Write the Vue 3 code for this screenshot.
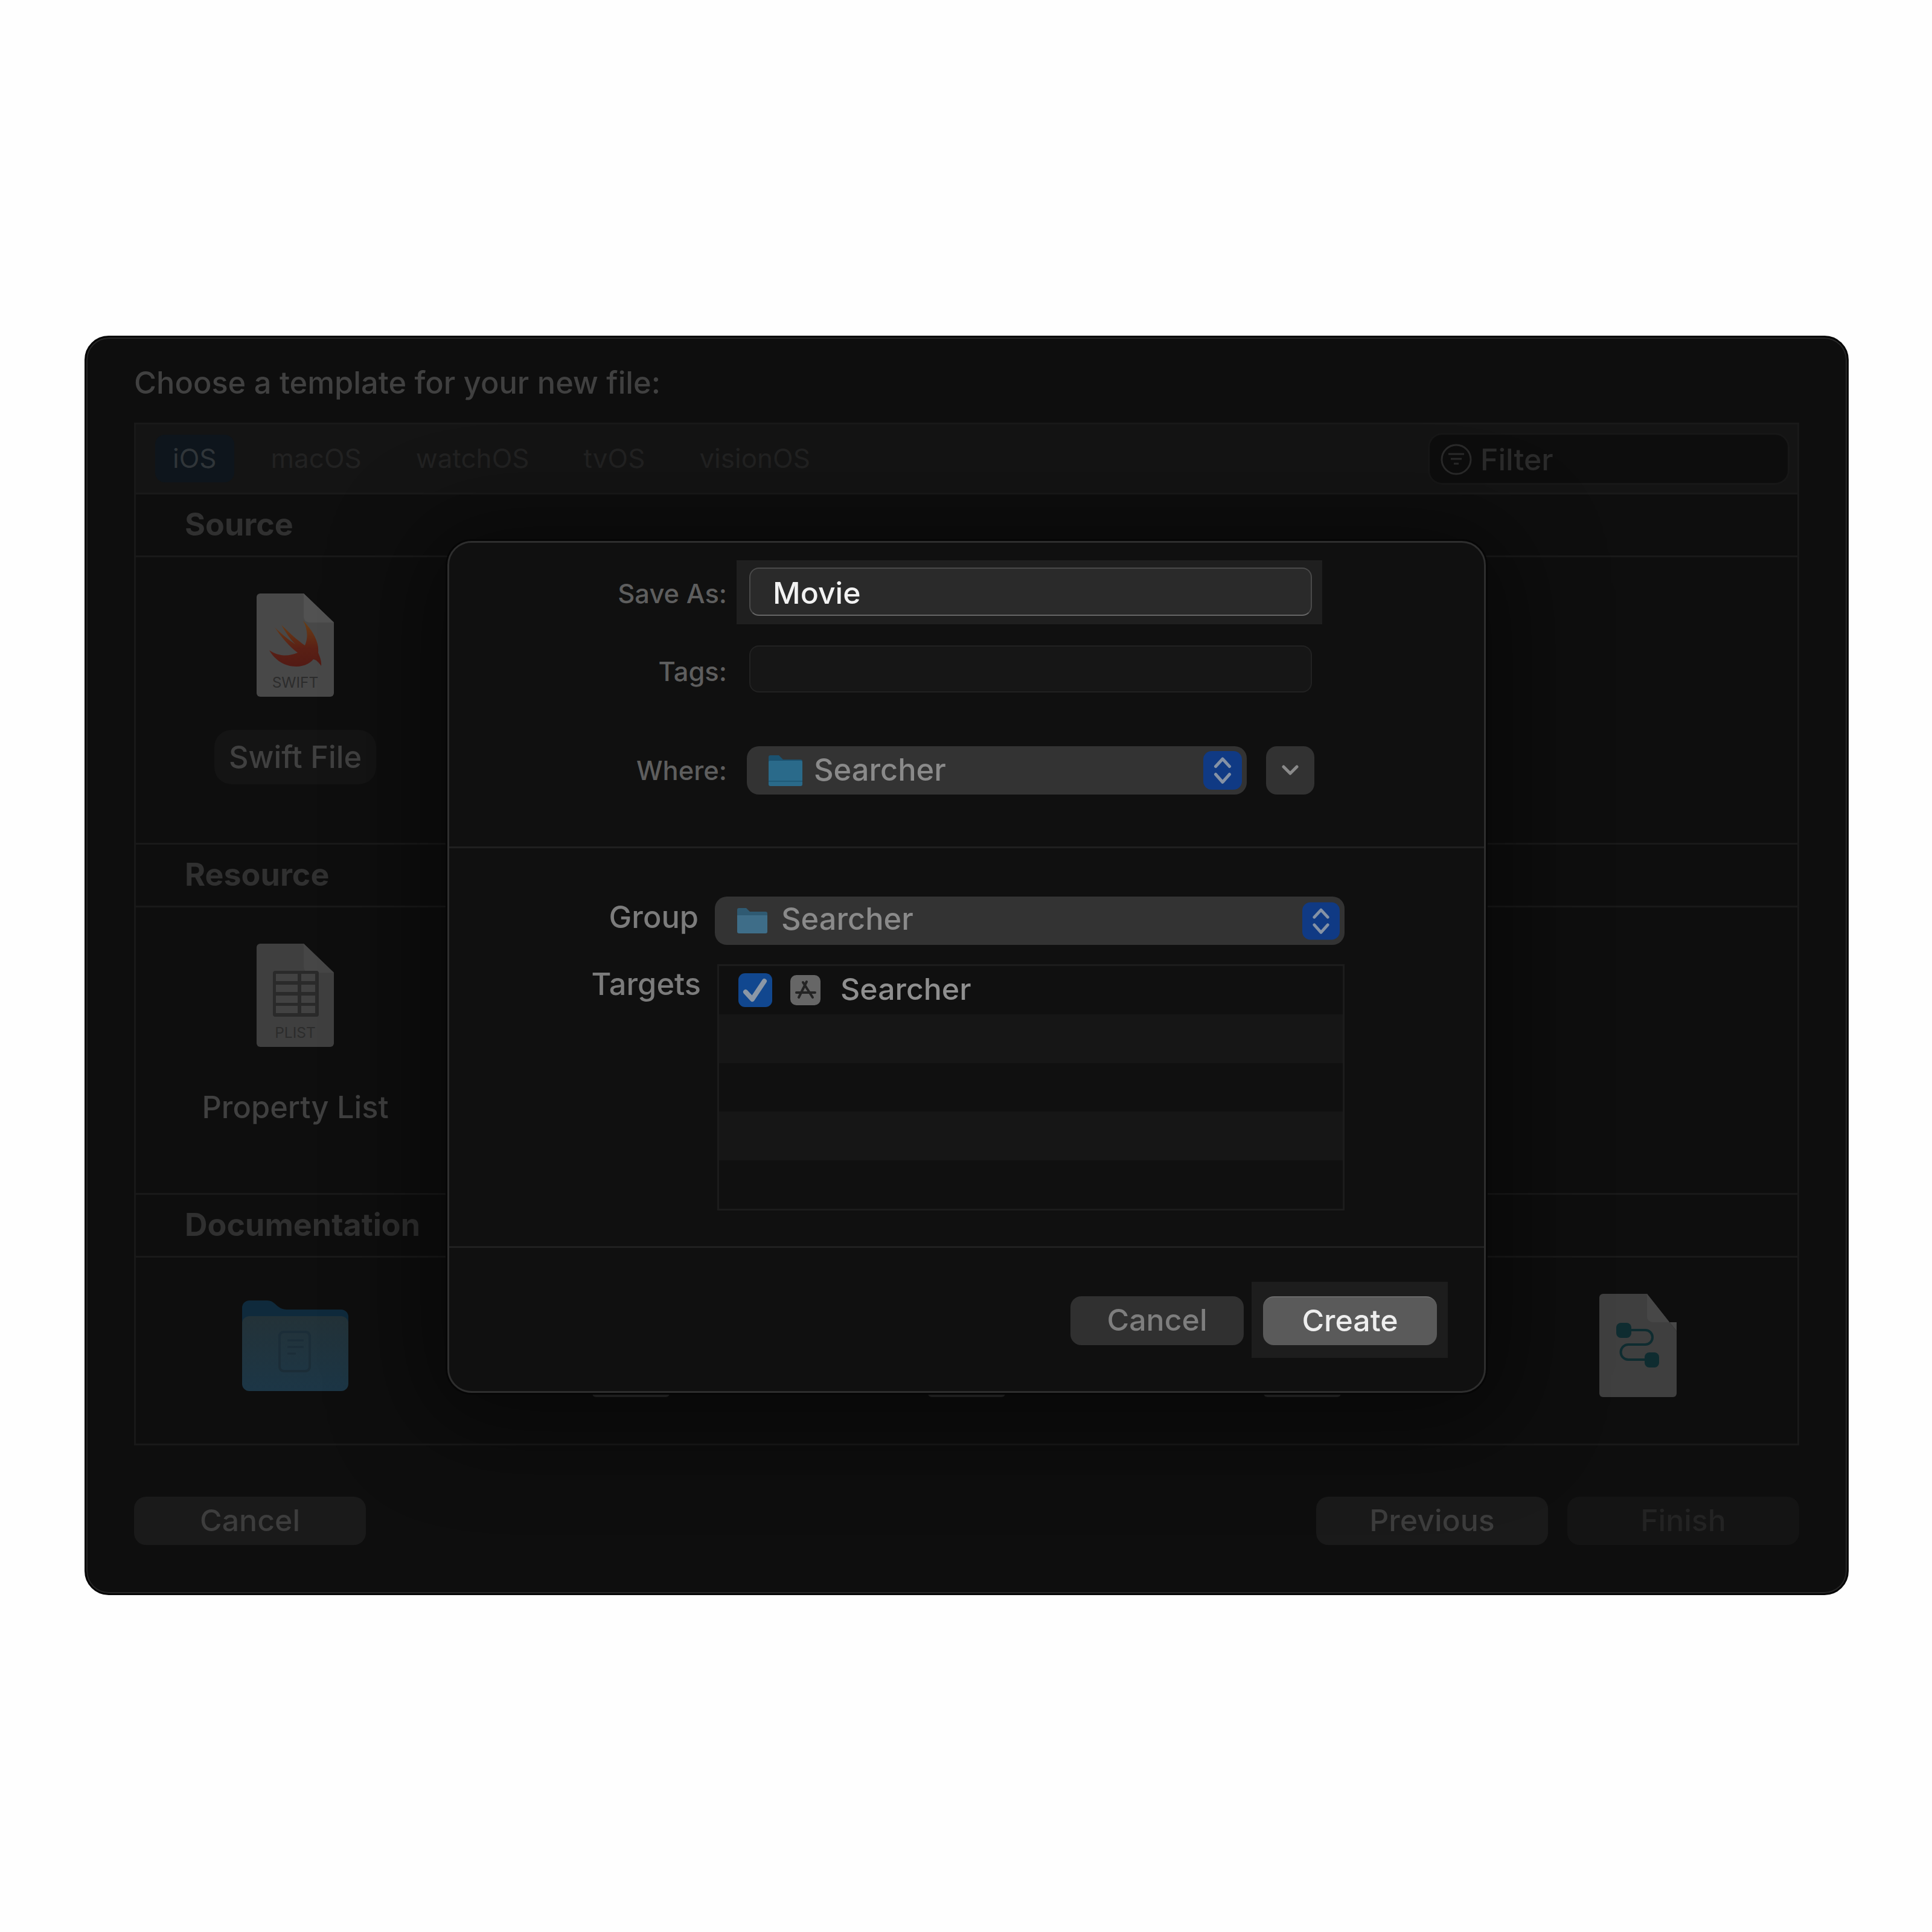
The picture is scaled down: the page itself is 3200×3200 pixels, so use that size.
<template>
  <div class="page">
    <div class="window">
      <div class="title">Choose a template for your new file:</div>

      <div class="panel">
        <div class="tabbar">
          <div class="tabs">
            <div v-for="(t, i) in tabs" :key="t" class="tab" :class="{ active: i === 0 }">{{ t }}</div>
          </div>
          <div class="filter">
            <svg width="52" height="52" viewBox="0 0 52 52" fill="none" stroke="#2a2a2a" stroke-width="3">
              <circle cx="26" cy="26" r="24" />
              <path d="M13 17H39M17 25H35M22 33H30" />
            </svg>
            <span>Filter</span>
          </div>
        </div>

        <div class="head">Source</div>
        <div class="items">
          <div class="item">
            <svg class="file" width="128" height="171" viewBox="0 0 128 171">
              <defs>
                <linearGradient id="swiftGrad" x1="0" y1="0" x2="0" y2="1">
                  <stop offset="0" stop-color="#6a4015" />
                  <stop offset="0.6" stop-color="#5a2015" />
                  <stop offset="1" stop-color="#521a14" />
                </linearGradient>
              </defs>
              <path d="M6 0H78L128 48V165a6 6 0 0 1-6 6H6a6 6 0 0 1-6-6V6a6 6 0 0 1 6-6Z" fill="#484848" />
              <path d="M78 0L128 48H87a9 9 0 0 1-9-9Z" fill="#525252" />
              <path d="M77 45C92 60 104 80 102 98C105 105 108 113 107 120C103 114 99 110 94 109C86 118 76 121 66 121C46 121 30 110 21 94C36 104 52 105 68 98C54 88 41 72 30 56C42 68 55 78 64 84C56 76 47 63 41 52C52 63 68 78 80 86C86 72 84 58 77 45Z" fill="url(#swiftGrad)" />
              <text x="64" y="156" text-anchor="middle" class="ext">SWIFT</text>
            </svg>
            <div class="label selected">Swift File</div>
          </div>
        </div>

        <div class="head">Resource</div>
        <div class="items">
          <div class="item">
            <svg class="file" width="128" height="171" viewBox="0 0 128 171">
              <path d="M6 0H78L128 48V165a6 6 0 0 1-6 6H6a6 6 0 0 1-6-6V6a6 6 0 0 1 6-6Z" fill="#3f3f3f" />
              <path d="M78 0L128 48H87a9 9 0 0 1-9-9Z" fill="#464646" />
              <rect x="27" y="45" width="76" height="76" rx="4" fill="#2a2a2a" />
              <g fill="#424242">
                <template v-for="y in plistRows" :key="y">
                  <rect x="32" :y="y" width="36" height="12" />
                  <rect x="74" :y="y" width="23" height="12" />
                </template>
              </g>
              <text x="64" y="156" text-anchor="middle" class="ext">PLIST</text>
            </svg>
            <div class="label">Property List</div>
          </div>
        </div>

        <div class="head">Documentation</div>
        <div class="items last">
          <div class="item">
            <svg width="176" height="171" viewBox="0 0 176 171">
              <defs>
                <linearGradient id="docFolder" x1="0" y1="0" x2="0" y2="1">
                  <stop offset="0" stop-color="#233238" />
                  <stop offset="1" stop-color="#1c3646" />
                </linearGradient>
              </defs>
              <g transform="translate(0 11)">
                <path d="M0 12A12 12 0 0 1 12 0H42C47 0 51 2 55 6C60 11 66 15 74 15H164A12 12 0 0 1 176 27V60H0Z" fill="#0f2a3c" />
                <path d="M0 38A12 12 0 0 1 12 26H164A12 12 0 0 1 176 38V138A12 12 0 0 1 164 150H12A12 12 0 0 1 0 138Z" fill="url(#docFolder)" />
                <rect x="62" y="52" width="50" height="65" rx="7" fill="none" stroke="#1b2d38" stroke-width="4" />
                <path d="M75 66H102M75 77H102M75 88H89" stroke="#1b2d38" stroke-width="3" fill="none" />
              </g>
            </svg>
          </div>
          <div v-for="n in 3" :key="n" class="item">
            <svg class="file" width="128" height="171" viewBox="0 0 128 171">
              <path d="M6 0H78L128 48V165a6 6 0 0 1-6 6H6a6 6 0 0 1-6-6V6a6 6 0 0 1 6-6Z" fill="#2c2c2c" />
            </svg>
          </div>
          <div class="item">
            <svg class="file" width="128" height="171" viewBox="0 0 128 171">
              <path d="M6 0H79L128 62V165a6 6 0 0 1-6 6H6a6 6 0 0 1-6-6V6a6 6 0 0 1 6-6Z" fill="#3f3f3f" />
              <path d="M79 0L128 62L128 47H88a9 9 0 0 1-9-9Z" fill="#474747" />
              <path d="M40 60H76a12 12 0 0 1 0 24H48a12.5 12.5 0 0 0 0 25H87" fill="none" stroke="#0f2c30" stroke-width="4" />
              <rect x="28" y="48" width="25" height="25" rx="8" fill="#0f2c30" />
              <rect x="75" y="97" width="24" height="25" rx="8" fill="#0f2c30" />
            </svg>
          </div>
        </div>
      </div>

      <div class="footer">
        <button class="wbtn">Cancel</button>
        <div class="footer-right">
          <button class="wbtn">Previous</button>
          <button class="wbtn off">Finish</button>
        </div>
      </div>

      <!-- save sheet -->
      <div class="sheet">
        <div class="sec form">
          <div class="row">
            <div class="flabel save">Save As:</div>
            <div class="ring">
              <div class="input on">Movie</div>
            </div>
          </div>
          <div class="row tags">
            <div class="flabel">Tags:</div>
            <div class="input empty"></div>
          </div>
          <div class="row where">
            <div class="flabel">Where:</div>
            <div class="popup wherepop">
              <svg class="where-folder" width="56" height="51" viewBox="0 0 56 51">
                <path d="M0 3a3 3 0 0 1 3-3H17L24 7H53a3 3 0 0 1 3 3V20H0Z" fill="#1b5270" />
                <path d="M0 11a2 2 0 0 1 2-2H54a2 2 0 0 1 2 2V48a3 3 0 0 1-3 3H3a3 3 0 0 1-3-3Z" fill="#2a6a8a" />
                <path d="M0 43H56" stroke="#1f5a78" stroke-width="2" />
              </svg>
              <span class="lift">Searcher</span>
              <svg class="stepper" width="64" height="64" viewBox="0 0 64 64" fill="none" stroke="#8592a5" stroke-width="5" stroke-linecap="round" stroke-linejoin="round">
                <rect width="64" height="64" rx="14" fill="#103a84" stroke="none" />
                <path d="M20.5 25.5L32 13L43.5 25.5M20.5 38.5L32 51.5L43.5 38.5" />
              </svg>
            </div>
            <div class="disclosure">
              <svg width="28" height="18" viewBox="0 0 28 18" fill="none" stroke="#8a8a8a" stroke-width="5" stroke-linecap="round" stroke-linejoin="round">
                <path d="M3 3L14 14L25 3" />
              </svg>
            </div>
          </div>
        </div>

        <div class="sec group">
          <div class="row">
            <div class="glabel grp">Group</div>
            <div class="popup grouppop">
              <svg class="group-folder" width="50" height="42" viewBox="0 0 50 42">
                <path d="M0 3a3 3 0 0 1 3-3H15L21 6H47a3 3 0 0 1 3 3V16H0Z" fill="#2f5a72" />
                <path d="M0 12H50V39a3 3 0 0 1-3 3H3a3 3 0 0 1-3-3Z" fill="#3e6d88" />
              </svg>
              <span class="lift more">Searcher</span>
              <svg class="stepper" width="62" height="63" viewBox="0 0 64 64" fill="none" stroke="#8592a5" stroke-width="5" stroke-linecap="round" stroke-linejoin="round">
                <rect width="64" height="64" rx="14" fill="#103a84" stroke="none" />
                <path d="M20.5 25.5L32 13L43.5 25.5M20.5 38.5L32 51.5L43.5 38.5" />
              </svg>
            </div>
          </div>
          <div class="row targets">
            <div class="glabel tlabel">Targets</div>
            <div class="list">
              <div v-for="n in 5" :key="n" class="lrow">
                <template v-if="n === 1">
                  <svg width="56" height="56" viewBox="0 0 56 56" fill="none">
                    <rect width="56" height="56" rx="11" fill="#11478f" />
                    <path d="M12 31L23 43L43 13" stroke="#8b97a6" stroke-width="8" stroke-linecap="round" stroke-linejoin="round" />
                  </svg>
                  <svg class="appicon" width="50" height="50" viewBox="0 0 50 50" fill="none">
                    <rect width="50" height="50" rx="10" fill="#666" />
                    <path d="M14 37L27 11M21 12L37 37M10 29H41" stroke="#242424" stroke-width="4" stroke-linecap="round" />
                  </svg>
                  <span class="lift">Searcher</span>
                </template>
              </div>
            </div>
          </div>
        </div>

        <div class="sec actions">
          <button class="sbtn">Cancel</button>
          <div class="btn-ring">
            <button class="sbtn primary">Create</button>
          </div>
        </div>
      </div>
    </div>
  </div>
</template>

<script setup>
const tabs = ['iOS', 'macOS', 'watchOS', 'tvOS', 'visionOS']
const plistRows = [50, 68, 86, 103]
</script>

<style>
html, body {
  margin: 0;
  background: #fefefe;
}
</style>

<style scoped>
* {
  box-sizing: border-box;
}

.page {
  width: 3200px;
  height: 3200px;
  padding: 556px 0 0 140px;
  font-family: Inter, "Liberation Sans", sans-serif;
  font-weight: 500;
  background: #fefefe;
}

.window {
  position: relative;
  width: 2922px;
  height: 2086px;
  padding: 45px 79px 0;
  background: #0e0e0e;
  border: 3px solid #060606;
  border-radius: 40px;
  box-shadow: inset 0 0 0 2px #262626;
  overflow: hidden;
}

.title {
  height: 60px;
  margin: 0 0 36px;
  font-size: 50.5px;
  line-height: 60px;
  color: #404040;
}

.panel {
  display: flex;
  flex-direction: column;
  width: 2758px;
  height: 1694px;
  border: 3px solid #191919;
}

.tabbar {
  display: flex;
  justify-content: space-between;
  align-items: center;
  height: 116px;
  padding: 0 13px 0 32px;
  background: #141414;
  border-bottom: 3px solid #191919;
}

.tabs {
  display: flex;
  gap: 32px;
}

.tab {
  height: 79px;
  padding: 0 29px;
  font-size: 44px;
  font-weight: 400;
  line-height: 78px;
  color: #222;
  border-radius: 16px;
}

.tab.active {
  color: #303539;
  background: #0e151c;
}

.filter {
  display: flex;
  align-items: center;
  gap: 14px;
  width: 599px;
  height: 86px;
  padding: 2px 0 0 18px;
  font-size: 50px;
  color: #2b2b2b;
  background: #0d0d0d;
  border: 3px solid #171717;
  border-radius: 24px;
}

.head {
  flex: none;
  height: 104px;
  padding-left: 81px;
  font-size: 52px;
  font-weight: 700;
  line-height: 100px;
  color: #303030;
  border-bottom: 3px solid #191919;
}

.items {
  display: flex;
  justify-content: space-between;
  flex: none;
  height: 476px;
  padding: 60px 200px 0;
  border-bottom: 3px solid #191919;
}

.items.last {
  flex: 1;
  height: auto;
  border-bottom: 0;
}

.item {
  display: flex;
  flex-direction: column;
  align-items: center;
  width: 128px;
}

.item svg {
  flex: none;
}

.ext {
  font-family: Inter, "Liberation Sans", sans-serif;
  font-size: 24.5px;
  font-weight: 400;
  fill: #2c2c2c;
}

.label {
  flex: none;
  height: 90px;
  margin-top: 55px;
  padding: 0 24px;
  font-size: 50.5px;
  line-height: 90px;
  color: #404040;
  white-space: nowrap;
  border-radius: 28px;
}

.label.selected {
  background: #141414;
}

.footer {
  display: flex;
  justify-content: space-between;
  margin: 85px 0 0;
}

.footer-right {
  display: flex;
  gap: 32px;
}

.wbtn {
  width: 384px;
  height: 80px;
  padding: 0 0 2px;
  font-family: inherit;
  font-size: 50px;
  font-weight: 500;
  color: #3d3d3d;
  background: #1a1a1a;
  border: 0;
  border-radius: 20px;
}

.wbtn.off {
  color: #232323;
  background: #141414;
}

.sheet {
  position: absolute;
  top: 337px;
  left: 598px;
  display: flex;
  flex-direction: column;
  width: 1720px;
  height: 1411px;
  background: #101010;
  border: 3px solid #2e2e2e;
  border-radius: 40px;
  box-shadow: 0 0 0 3px #060606, 0 20px 160px 40px rgba(0, 0, 0, 0.45);
}

.sec {
  flex: none;
}

.form {
  height: 506px;
  padding-top: 29px;
  border-bottom: 3px solid #202020;
}

.row {
  display: flex;
  align-items: center;
}

.flabel {
  width: 460px;
  font-size: 43.5px;
  text-align: right;
  color: #5e5e5e;
}

.flabel.save {
  padding-top: 4px;
}

.ring {
  display: flex;
  width: 970px;
  height: 106px;
  margin-left: 16px;
  padding: 12px 17px 14px 21px;
  background: #1f1f1f;
}

.input {
  width: 100%;
  height: 80px;
  padding-left: 37px;
  font-size: 50px;
  line-height: 80px;
  color: #f2f2f2;
  border-radius: 16px;
}

.input.on {
  background: #2a2a2a;
  border: 2px solid #4a4a4a;
  border-bottom-color: #666;
  line-height: 80px;
}

.input.empty {
  width: 932px;
  height: 78px;
  margin-left: 37px;
  background: #161616;
  border: 2px solid #222;
}

.tags {
  margin-top: 35px;
}

.tags .flabel {
  padding-top: 8px;
}

.where {
  margin-top: 89px;
}

.popup {
  display: flex;
  align-items: center;
  height: 80px;
  font-size: 50.5px;
  color: #8a8a8a;
  background: #333;
  border-radius: 20px;
}

.lift {
  padding-bottom: 4px;
}

.lift.more {
  padding-bottom: 8px;
}

.wherepop {
  width: 828px;
  margin-left: 33px;
  padding-left: 36px;
}

.where-folder {
  margin-right: 19px;
}

.stepper {
  margin-left: auto;
  margin-right: 8px;
}

.disclosure {
  display: flex;
  justify-content: center;
  align-items: center;
  width: 80px;
  height: 80px;
  margin-left: 32px;
  background: #323232;
  border-radius: 18px;
}

.group {
  height: 662px;
  padding-top: 80px;
  border-bottom: 3px solid #202020;
}

.glabel {
  width: 413px;
  margin-right: 27px;
  font-size: 50.5px;
  text-align: right;
  color: #7c7c7c;
}

.glabel.grp {
  padding-bottom: 14px;
}

.grouppop {
  width: 1043px;
  padding-left: 37px;
}

.group-folder {
  margin-right: 23px;
}

.targets {
  align-items: flex-start;
  margin-top: 32px;
  padding-left: 4px;
}

.tlabel {
  padding-top: 2px;
}

.list {
  width: 1039px;
  height: 408px;
  border: 3px solid #1c1c1c;
}

.lrow {
  display: flex;
  align-items: center;
  height: 80.4px;
  padding-left: 32px;
  font-size: 50px;
  color: #8f8f8f;
  background: #101010;
}

.lrow:nth-child(even) {
  background: #161616;
}

.appicon {
  margin-left: 30px;
  margin-right: 33px;
}

.actions {
  display: flex;
  justify-content: flex-end;
  align-items: flex-start;
  gap: 13px;
  padding: 56px 60px 0 0;
}

.actions > .sbtn {
  margin-top: 24px;
}

.btn-ring {
  padding: 24px 18px 21px 19px;
  background: #1d1d1d;
}

.sbtn {
  display: block;
  width: 287px;
  height: 81px;
  padding: 0 0 3px;
  font-family: inherit;
  font-size: 50px;
  font-weight: 500;
  color: #7e7e7e;
  background: #303030;
  border: 0;
  border-radius: 18px;
}

.sbtn.primary {
  width: 288px;
  color: #eee;
  background: #5a5a5a;
  border-top: 2px solid #6a6a6a;
}
</style>
